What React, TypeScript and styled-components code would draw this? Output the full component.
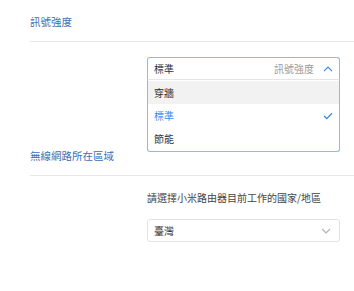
import { createGlobalStyle, styled } from "styled-components";

const GlobalStyle = createGlobalStyle`
  body {
    margin: 0;
    background: #ffffff;
    font-family: "Noto Sans CJK TC", "Noto Sans", sans-serif;
    color: #333333;
  }
`;

const Page = styled.div`
  padding-left: 30px;
  width: 324px;
  height: 291px;
  overflow: hidden;
`;

const Section = styled.section<{ $top: number }>`
  padding-top: ${(p) => p.$top}px;
`;

const Title = styled.h3`
  margin: 0;
  font-size: 10.5px;
  line-height: 12px;
  font-weight: 400;
  color: #3c6fb4;
  padding-bottom: 13px;
  border-bottom: 1px solid #e8e8e8;
`;

const Body = styled.div<{ $top: number; $bottom: number }>`
  padding: ${(p) => p.$top}px 0 ${(p) => p.$bottom}px 117px;
  width: 193px;
`;

const Hint = styled.div`
  font-size: 10px;
  line-height: 12px;
  color: #444444;
  margin-bottom: 15px;
`;

const Select = styled.div<{ $open?: boolean }>`
  position: relative;
  height: 23px;
  box-sizing: border-box;
  border: 1px solid ${(p) => (p.$open ? "#8dbbe6" : "#e3e3e3")};
  border-radius: ${(p) => (p.$open ? "3px 3px 0 0" : "3px")};
  border-bottom-color: ${(p) => (p.$open ? "#e6e6e6" : "#e3e3e3")};
  display: flex;
  align-items: center;
  padding: 0 6px 0 6px;
  font-size: 10px;
`;

const Value = styled.span`
  flex: 1;
  color: #333333;
`;

const Placeholder = styled.span`
  color: #9a9a9a;
  margin-right: 9px;
`;

const Menu = styled.ul`
  position: absolute;
  left: -1px;
  right: -1px;
  top: 22px;
  margin: 0;
  padding: 1px 0 1px;
  list-style: none;
  background: #ffffff;
  border: 1px solid #8dbbe6;
  border-top: none;
  border-radius: 0 0 3px 3px;
  z-index: 2;
`;

const Option = styled.li<{ $hover?: boolean; $active?: boolean }>`
  height: 23px;
  display: flex;
  align-items: center;
  justify-content: space-between;
  padding: 0 6px;
  font-size: 10px;
  background: ${(p) => (p.$hover ? "#f2f2f2" : "transparent")};
  color: ${(p) => (p.$active ? "#3f86e4" : "#333333")};
`;

const Chevron = ({ up }: { up?: boolean }) => (
  <svg width="10" height="6" viewBox="0 0 10 6" style={{ marginRight: up ? 0 : 2 }}>
    <path
      d={up ? "M1 5.2 L5 1.2 L9 5.2" : "M1 1 L5 5 L9 1"}
      fill="none"
      stroke={up ? "#3f86e4" : "#b5b5b5"}
      strokeWidth="1.2"
    />
  </svg>
);

const Check = () => (
  <svg width="10" height="8" viewBox="0 0 10 8">
    <path d="M1 4 L3.8 6.6 L9 1.2" fill="none" stroke="#3f86e4" strokeWidth="1.3" />
  </svg>
);

const options = ["穿牆", "標準", "節能"];

export default function App() {
  return (
    <>
      <GlobalStyle />
      <Page>
        <Section $top={16}>
          <Title>訊號強度</Title>
          <Body $top={15} $bottom={70}>
            <Select $open>
              <Value>標準</Value>
              <Placeholder>訊號強度</Placeholder>
              <Chevron up />
              <Menu>
                {options.map((o) => (
                  <Option key={o} $hover={o === "穿牆"} $active={o === "標準"}>
                    {o}
                    {o === "標準" && <Check />}
                  </Option>
                ))}
              </Menu>
            </Select>
          </Body>
        </Section>
        <Section $top={0}>
          <Title>無線網路所在區域</Title>
          <Body $top={16} $bottom={0}>
            <Hint>請選擇小米路由器目前工作的國家/地區</Hint>
            <Select>
              <Value>臺灣</Value>
              <Chevron />
            </Select>
          </Body>
        </Section>
      </Page>
    </>
  );
}
